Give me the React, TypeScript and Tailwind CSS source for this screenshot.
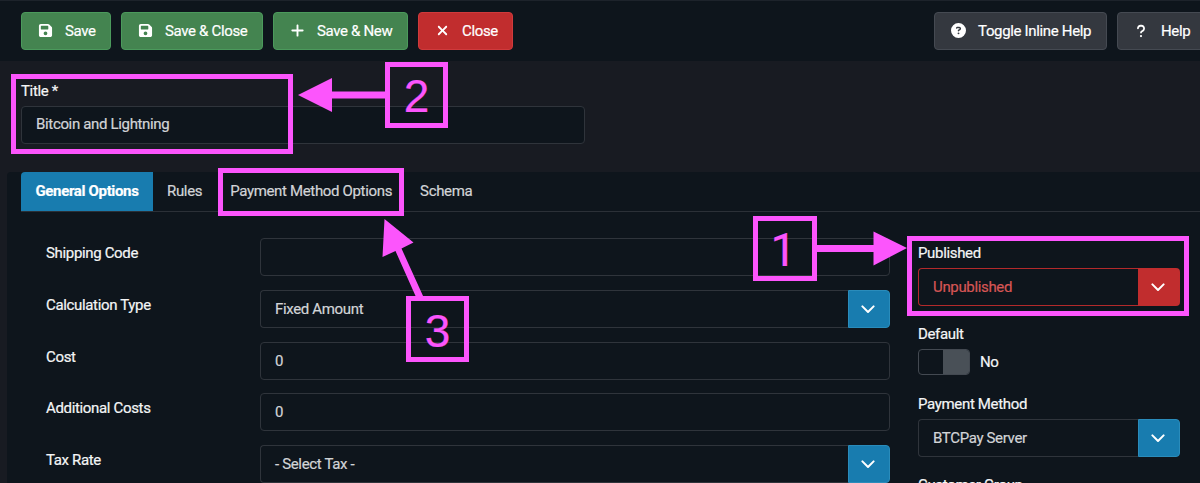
import React from "react";
import { FaFloppyDisk, FaPlus, FaXmark, FaCircleQuestion, FaQuestion } from "react-icons/fa6";

function ToolButton({ icon, label, className }: { icon: React.ReactNode; label: string; className: string }) {
  return (
    <button className={`flex h-[38px] shrink-0 items-center gap-[12px] rounded-[4px] border pb-px text-white ${className}`}>
      <span className="flex w-4 justify-center">{icon}</span>
      <span className="whitespace-nowrap">{label}</span>
    </button>
  );
}

function Chevron({ className }: { className: string }) {
  return (
    <span className={`flex h-full w-[42px] shrink-0 items-center justify-center rounded-r-[4px] pr-[2px] pt-px ${className}`}>
      <svg width="14" height="9" viewBox="0 0 14 9" fill="none" stroke="#fff" strokeWidth="2" strokeLinecap="round" strokeLinejoin="round">
        <path d="M1.4 1.4 7 7l5.6-5.6" />
      </svg>
    </span>
  );
}

function Field({ value, select }: { value: string; select?: boolean }) {
  return (
    <div className="flex h-[38px] w-full">
      <div className={`flex flex-1 items-center border border-[#2f343b] px-[14px] text-[#d2d4d7] ${select ? "rounded-l-[4px] border-r-0" : "rounded-[4px]"}`}>
        <span>{value}</span>
      </div>
      {select && <Chevron className="border border-[#2a8cbb] bg-[#187caf]" />}
    </div>
  );
}

const rows = [
  { label: "Shipping Code", value: "" },
  { label: "Calculation Type", value: "Fixed Amount", select: true },
  { label: "Cost", value: "0" },
  { label: "Additional Costs", value: "0" },
  { label: "Tax Rate", value: "- Select Tax -", select: true },
];

function NumberBox({ n, className }: { n: string; className: string }) {
  return (
    <div className={`absolute flex items-center justify-center border-5 border-[#fc55fc] text-[46px] leading-none tracking-normal text-[#fc55fc] ${className}`}>
      <span>{n}</span>
    </div>
  );
}

function Annotations() {
  return (
    <div className="pointer-events-none absolute inset-0">
      <div className="absolute left-[11px] top-[74px] h-[80px] w-[282px] border-5 border-[#fc55fc]" />
      <div className="absolute left-[218px] top-[168px] h-[48px] w-[186px] border-5 border-[#fc55fc]" />
      <div className="absolute left-[907px] top-[236px] h-[80px] w-[282px] border-5 border-[#fc55fc]" />
      <svg className="absolute inset-0" width="1200" height="483" fill="#fc55fc">
        <path d="M298 95 332 78V91.500H386V98.500H332V112Z" />
        <path d="M907 248 873.500 231.500V245H816V252H873.500V265.500Z" />
        <path d="M384.500 219 413.500 242.500 401.500 248.500 423.500 297H416L395.500 251 382.500 257Z" />
      </svg>
      <NumberBox n="2" className="left-[385px] top-[62px] h-[66px] w-[63px] pt-[2px] font-['Liberation_Sans',sans-serif]" />
      <NumberBox n="1" className="left-[753px] top-[216px] h-[65px] w-[64px] font-[Roboto,sans-serif] pr-[3px] pt-[2px]" />
      <NumberBox n="3" className="left-[406px] top-[296px] h-[66px] w-[63px] pt-[3px] font-['Liberation_Sans',sans-serif]" />
    </div>
  );
}

export default function App() {
  return (
    <div className="relative flex h-[483px] w-[1200px] flex-col overflow-hidden bg-[#181b22] font-[Roboto,sans-serif] text-[15px] leading-[22px] tracking-[-0.34px] text-[#f4f5f6] [-webkit-text-stroke:0.2px]">
      <header className="flex h-[61px] shrink-0 gap-[10px] border-t border-[#1d232b] bg-[#0e151c] pl-[21px] pt-[11px]">
        <ToolButton className="w-[90px] border-[#4b9a5c] bg-[#448450] pl-[15px]" icon={<FaFloppyDisk size={15} />} label="Save" />
        <ToolButton className="w-[142px] border-[#4b9a5c] bg-[#448450] pl-[15px]" icon={<FaFloppyDisk size={15} />} label="Save & Close" />
        <ToolButton className="w-[135px] border-[#4b9a5c] bg-[#448450] pl-[15px]" icon={<FaPlus size={15} />} label="Save & New" />
        <ToolButton className="w-[95px] border-[#d03a3c] bg-[#c12d2e] pl-[15px]" icon={<FaXmark size={15} />} label="Close" />
        <div className="ml-auto flex w-[266px] gap-[10px]">
          <ToolButton className="w-[173px] border-[#454a52] bg-[#34383f] pl-[15px]" icon={<FaCircleQuestion size={15} />} label="Toggle Inline Help" />
          <ToolButton className="w-[95px] border-[#454a52] bg-[#34383f] pl-[15px]" icon={<FaQuestion size={14} />} label="Help" />
        </div>
      </header>

      <section className="flex h-[111px] shrink-0 flex-col pl-[21px] pt-[19px]">
        <label>Title *</label>
        <div className="mt-1 flex h-[38px] w-[564px] items-center rounded-[4px] border border-[#2f343b] bg-[#0e151c] px-[14px] pb-[2px] text-[#d2d4d7]">
          Bitcoin and Lightning
        </div>
      </section>

      <main className="ml-[7px] flex flex-1 flex-col rounded-tl-[4px] bg-[#0e151c] pl-[14px]">
        <nav className="flex h-[40px] shrink-0 border-b border-[#2b3037] text-[#d2d4d7]">
          <span className="flex w-[132px] items-center justify-center rounded-tl-[4px] bg-[#187caf] pb-[2px] font-bold text-white">General Options</span>
          <span className="flex items-center px-[14px] pb-[2px]">Rules</span>
          <span className="flex items-center px-[14px] pb-[2px]">Payment Method Options</span>
          <span className="flex items-center px-[14px] pb-[2px]">Schema</span>
        </nav>
        <div className="flex pt-[26px]">
          <div className="ml-[25px] flex w-[844px] shrink-0 flex-col gap-[13.800px]">
            {rows.map((r) => (
              <div key={r.label} className="flex">
                <label className="w-[214px] shrink-0 pt-1">{r.label}</label>
                <Field value={r.value} select={r.select} />
              </div>
            ))}
          </div>
          <aside className="ml-[28px] flex w-[262px] shrink-0 flex-col pt-[4px]">
            <label>Published</label>
            <div className="mt-1 flex h-[38px]">
              <div className="flex flex-1 items-center rounded-l-[4px] border border-r-0 border-[#b32a2b] px-[14px] text-[#d65655]">
                <span>Unpublished</span>
              </div>
              <Chevron className="bg-[#c12d2e]" />
            </div>
            <label className="mt-[17px]">Default</label>
            <div className="mt-1 flex items-center gap-[10px]">
              <div className="flex h-[26px] w-[52px] justify-end overflow-hidden rounded-[4px] border border-[#434951]">
                <div className="w-[26px] bg-[#495057]" />
              </div>
              <span>No</span>
            </div>
            <label className="mt-[18px]">Payment Method</label>
            <div className="mt-1">
              <Field value="BTCPay Server" select />
            </div>
            <label className="mt-[17px] h-[9px]">Customer Group</label>
          </aside>
        </div>
      </main>
      <Annotations />
    </div>
  );
}
